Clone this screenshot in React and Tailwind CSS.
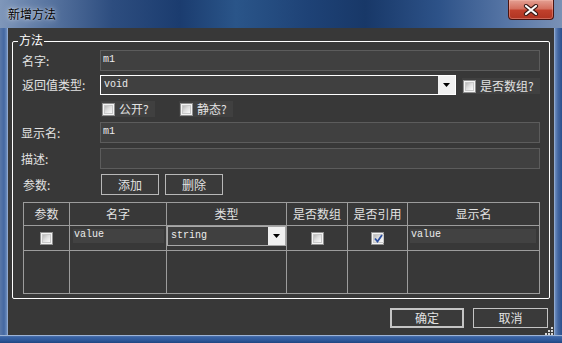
import React from "react";

function Check({ checked }) {
  return (
    <span className="w-[13px] h-[13px] shrink-0 border border-[#8f8f8f] bg-[#f4f4f4] p-[1px] flex">
      <span className="flex-1 bg-[linear-gradient(135deg,#b8b8b8_0%,#dedede_45%,#fbfbfb_100%)] border border-[#c8c8c8] flex items-center justify-center">
        {checked && (
          <svg width="9" height="9" viewBox="0 0 9 9">
            <path d="M1 4.5 L3.5 7.5 L8 1" fill="none" stroke="#2d4f9e" strokeWidth="1.8" />
          </svg>
        )}
      </span>
    </span>
  );
}

function Arrow() {
  return (
    <svg width="7" height="4" viewBox="0 0 7 4">
      <polygon points="0,0 7,0 3.5,4" fill="#000" />
    </svg>
  );
}

function Input({ value, className = "" }) {
  return (
    <div
      className={
        "h-[21px] flex-1 bg-[#404040] border border-[#5c5c5c] flex items-center pl-[2px] pb-[2px] font-['Liberation_Mono',monospace] text-[10px] text-[#ececec] " +
        className
      }
    >
      {value}
    </div>
  );
}

function Btn({ children, className = "" }) {
  return (
    <div
      className={
        "flex items-center justify-center bg-[#3a3a3a] text-[#e2e2e2] text-[12px] leading-[14px] " +
        className
      }
    >
      {children}
    </div>
  );
}

function CheckLabel({ label, className = "" }) {
  return (
    <div className={"h-[16px] bg-[#404040] flex items-center gap-[4px] pl-[1px] text-[#e2e2e2] text-[12px] leading-[14px] " + className}>
      <Check />
      <span>{label}</span>
    </div>
  );
}

export default function App() {
  return (
    <div className="w-[562px] h-[343px] overflow-hidden flex flex-col bg-[#2f5793] font-['Noto_Sans_CJK_SC','Noto_Sans',sans-serif]">
      {/* title bar */}
      <div className="h-[28px] shrink-0 flex items-start justify-between bg-[linear-gradient(90deg,#7f97ba_0%,#5b77a2_8%,#2d4d7f_20%,#1b3c6f_32%,#2a5589_42%,#1e4276_55%,#183868_65%,#2d5288_78%,#5675a5_90%,#7a91b5_100%)]">
        <span className="mt-[7px] ml-[8px] text-[12px] leading-[14px] text-black [text-shadow:0_0_6px_rgba(255,255,255,0.75),0_0_2px_rgba(255,255,255,0.6)]">
          新增方法
        </span>
        <div className="mr-[8px] w-[46px] h-[20px] rounded-b-[4px] border border-t-0 border-[#4a1410] bg-[linear-gradient(180deg,#e4a093_0%,#d4705f_45%,#c0402c_55%,#b03422_100%)] shadow-[inset_0_0_0_1px_rgba(255,200,190,0.35)] flex items-center justify-center">
          <svg width="16" height="12" viewBox="0 0 16 12">
            <path d="M3 2 L13 10 M13 2 L3 10" stroke="#3a1a16" strokeWidth="4.2" strokeLinecap="round" />
            <path d="M3 2 L13 10 M13 2 L3 10" stroke="#ffffff" strokeWidth="2.2" strokeLinecap="round" />
          </svg>
        </div>
      </div>

      {/* body */}
      <div className="flex h-[307px] shrink-0">
        <div className="w-[8px] bg-[linear-gradient(90deg,#5a78a8_0%,#4468a2_50%,#6f8fc0_90%,#c9d6ea_100%)]" />
        <div className="w-[546px] bg-[#383838] flex flex-col relative">
          {/* group box */}
          <div className="mt-[13px] mx-[4px] h-[258px] border border-white rounded-[2px] relative pt-[8px] pl-[9px] pr-[9px] pb-[4px] flex flex-col text-[#e2e2e2] text-[12px] leading-[14px]">
            <span className="absolute top-[-9px] left-[5px] px-[1px] bg-[#383838] text-white text-[12px] leading-[14px]">
              方法
            </span>

            {/* row 1 */}
            <div className="flex items-center h-[21px]">
              <span className="w-[78px]">名字:</span>
              <Input value="m1" />
            </div>

            {/* row 2 */}
            <div className="flex items-center h-[20px] mt-[4px]">
              <span className="w-[78px]">返回值类型:</span>
              <div className="w-[356px] h-[20px] border border-white bg-[#404040] flex">
                <span className="flex-1 flex items-center pl-[3px] pb-[1px] font-['Liberation_Mono',monospace] text-[10px] text-[#ececec]">
                  void
                </span>
                <span className="w-[17px] bg-[#f0f0f0] flex items-center justify-center">
                  <Arrow />
                </span>
              </div>
              <CheckLabel label="是否数组?" className="ml-[6px] w-[78px] mt-[2px]" />
            </div>

            {/* row 3 */}
            <div className="flex items-center h-[16px] mt-[6px] pl-[79px] gap-[24px]">
              <CheckLabel label="公开?" className="w-[54px]" />
              <CheckLabel label="静态?" className="w-[54px]" />
            </div>

            {/* row 4 */}
            <div className="flex items-center h-[21px] mt-[5px]">
              <span className="w-[78px] -ml-[1px] mr-[1px]">显示名:</span>
              <Input value="m1" />
            </div>

            {/* row 5 */}
            <div className="flex items-center h-[21px] mt-[5px]">
              <span className="w-[78px] -ml-[1px] mr-[1px]">描述:</span>
              <Input value="" />
            </div>

            {/* row 6 */}
            <div className="flex items-center h-[21px] mt-[5px]">
              <span className="w-[79px] pl-[1px]">参数:</span>
              <Btn className="w-[58px] h-[21px] border border-[#b8b8b8]">添加</Btn>
              <Btn className="w-[58px] h-[21px] border border-[#b8b8b8] ml-[6px]">删除</Btn>
            </div>

            {/* table */}
            <div className="mt-[7px] ml-[1px] grid grid-cols-[46px_97px_120px_61px_60px_132px] grid-rows-[23px_25px_43px] border-l border-t border-[#9c9c9c] w-[517px]">
              {["参数", "名字", "类型", "是否数组", "是否引用", "显示名"].map((h) => (
                <div key={h} className="border-r border-b border-[#9c9c9c] flex items-center justify-center text-[#e2e2e2] text-[12px]">
                  {h}
                </div>
              ))}
              <div className="border-r border-b border-[#9c9c9c] flex items-center justify-center">
                <Check />
              </div>
              <div className="border-r border-b border-[#9c9c9c] pl-[3px] pr-[2px] pt-[3px]">
                <div className="h-[14px] bg-[#424242] font-['Liberation_Mono',monospace] text-[10px] leading-[12px] text-[#ececec] pl-[1px]">
                  value
                </div>
              </div>
              <div className="border-r border-b border-[#9c9c9c] pb-[4px]">
                <div className="h-[20px] border border-[#a8a8a8] bg-[#404040] flex">
                  <span className="flex-1 flex items-center pl-[3px] font-['Liberation_Mono',monospace] text-[10px] text-[#ececec]">
                    string
                  </span>
                  <span className="w-[17px] bg-[#f0f0f0] flex items-center justify-center">
                    <Arrow />
                  </span>
                </div>
              </div>
              <div className="border-r border-b border-[#9c9c9c] flex items-center justify-center">
                <Check />
              </div>
              <div className="border-r border-b border-[#9c9c9c] flex items-center justify-center">
                <Check checked />
              </div>
              <div className="border-r border-b border-[#9c9c9c] pl-[2px] pr-[3px] pt-[3px]">
                <div className="h-[14px] bg-[#424242] font-['Liberation_Mono',monospace] text-[10px] leading-[12px] text-[#ececec] pl-[1px]">
                  value
                </div>
              </div>
              <div className="border-r border-b border-[#9c9c9c]" />
              <div className="border-r border-b border-[#9c9c9c]" />
              <div className="border-r border-b border-[#9c9c9c]" />
              <div className="border-r border-b border-[#9c9c9c]" />
              <div className="border-r border-b border-[#9c9c9c]" />
              <div className="border-r border-b border-[#9c9c9c]" />
            </div>
          </div>

          {/* bottom buttons */}
          <div className="mt-[9px] flex justify-end gap-[9px] pr-[6px]">
            <Btn className="w-[74px] h-[20px] border-2 border-[#c4c4c4]">确定</Btn>
            <Btn className="w-[75px] h-[20px] border border-[#c4c4c4]">取消</Btn>
          </div>

          {/* resize grip */}
          <svg className="absolute right-[1px] bottom-[0px]" width="9" height="9" viewBox="0 0 9 9">
            {[
              [7, 1],
              [4, 4],
              [7, 4],
              [1, 7],
              [4, 7],
              [7, 7],
            ].map(([x, y]) => (
              <rect key={x + "-" + y} x={x} y={y} width="2" height="2" fill="#d8d8d8" />
            ))}
          </svg>
        </div>
        <div className="w-[8px] bg-[linear-gradient(90deg,#c9d6ea_0%,#6f8fc0_10%,#4468a2_50%,#2a4f8c_100%)]" />
      </div>
      <div className="flex-1 bg-[linear-gradient(180deg,#c9d6ea_0%,#3d66a6_20%,#2b5597_70%,#1f4580_100%)]" />
    </div>
  );
}
